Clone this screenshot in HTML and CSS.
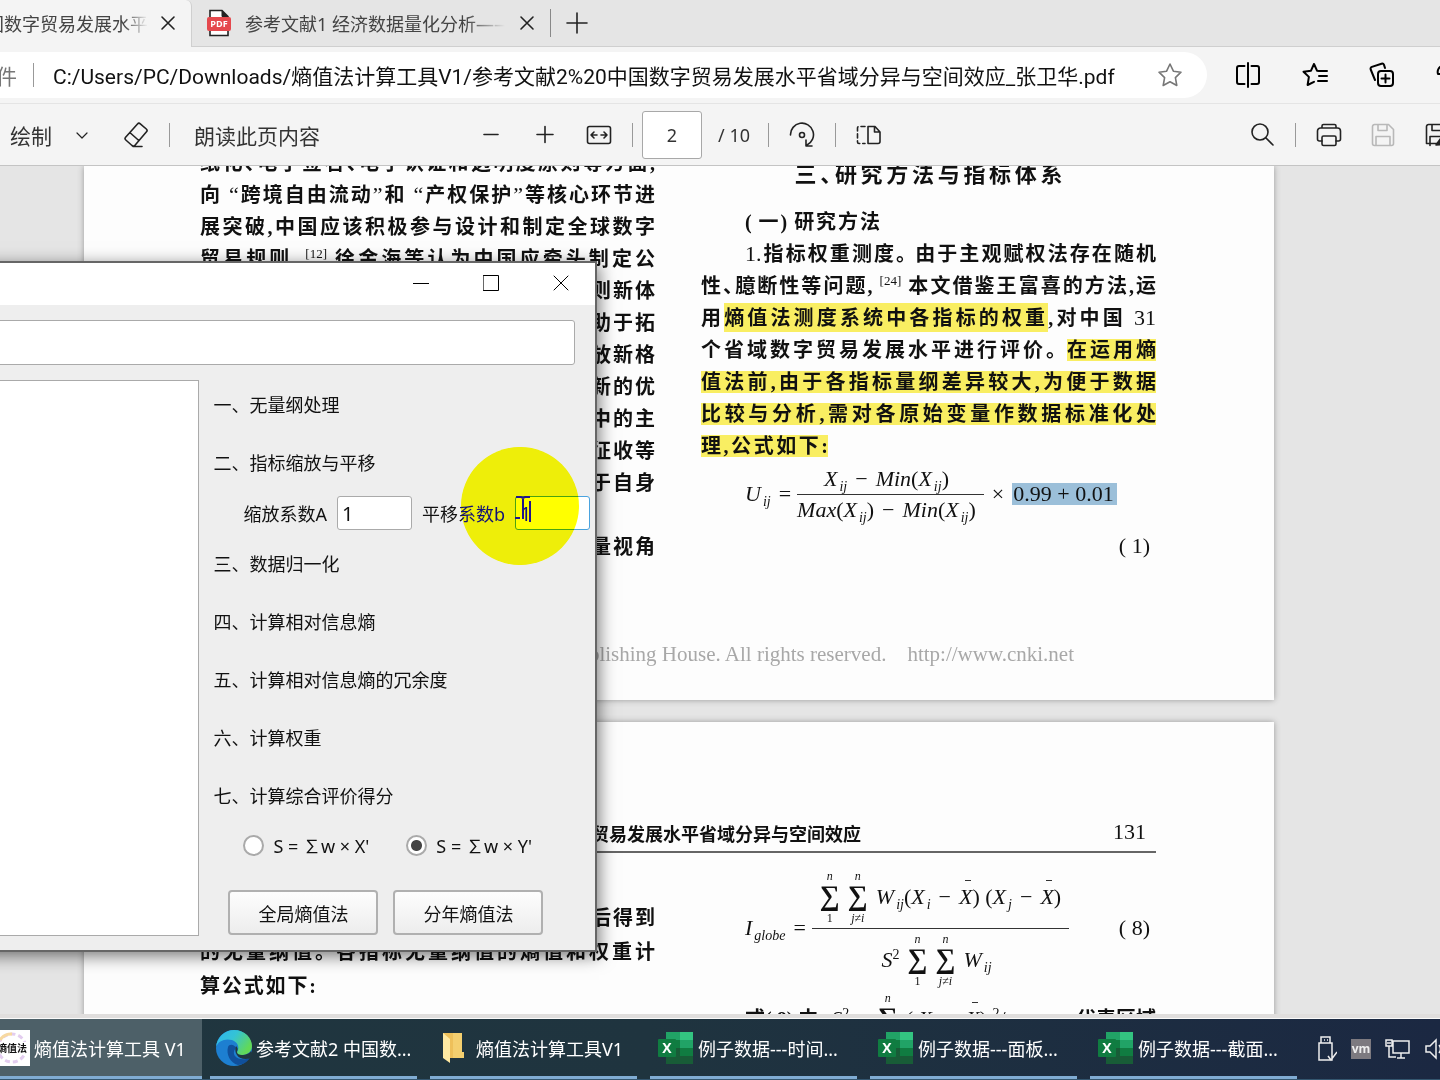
FILE: index.html
```html
<!DOCTYPE html>
<html lang="zh-CN">
<head>
<meta charset="utf-8">
<title>熵值法计算工具 V1</title>
<link rel="stylesheet" href="styles.css">
</head>
<body>
<div class="desktop">
  <div class="browser">
    <div class="tabs">
      <div class="tab tab-active">
        <span class="tab-title">国数字贸易发展水平</span>
        <button class="icon-btn" aria-label="关闭标签页"><svg width="16" height="16" viewBox="0 0 16 16"><path d="M2 2l12 12M14 2L2 14"/></svg></button>
      </div>
      <div class="tab tab-idle">
        <svg class="pdf-icon" width="24" height="28" viewBox="0 0 24 28"><path d="M3 1.500h12l6 6v19H3z" fill="#fff" stroke="#222" stroke-width="1.600"/><path d="M15 1.500v6h6" fill="#222" stroke="#222"/><rect x="0" y="8" width="24" height="14" rx="2" fill="#e5484d"/><text x="12" y="18" text-anchor="middle">PDF</text></svg>
        <span class="tab-title">参考文献1 经济数据量化分析——以</span>
        <button class="icon-btn" aria-label="关闭标签页"><svg width="16" height="16" viewBox="0 0 16 16"><path d="M2 2l12 12M14 2L2 14"/></svg></button>
      </div>
      <span class="tab-divider"></span>
      <button class="icon-btn" aria-label="新建标签页"><svg width="22" height="22" viewBox="0 0 22 22"><path d="M11 1v20M1 11h20"/></svg></button>
    </div>

    <div class="address">
      <div class="address-pill">
        <span class="scheme">件</span>
        <span class="divider"></span>
        <span class="url">C:/Users/PC/Downloads/熵值法计算工具V1/参考文献2%20中国数字贸易发展水平省域分异与空间效应_张卫华.pdf</span>
        <button class="icon-btn faint" aria-label="收藏"><svg width="26" height="26" viewBox="0 0 26 26"><path d="M13 2l3.400 7.200 7.600 1-5.600 5.400 1.400 7.900L13 19.800l-6.800 3.700 1.400-7.900L2 10.200l7.600-1z"/></svg></button>
      </div>
      <div class="address-tools">
        <button class="icon-btn" aria-label="拆分窗口"><svg width="26" height="26" viewBox="0 0 26 26"><path d="M9.500 4H4a2 2 0 0 0-2 2v14a2 2 0 0 0 2 2h5.500M16.500 4H22a2 2 0 0 1 2 2v14a2 2 0 0 1-2 2h-5.500M13 1v24"/></svg></button>
        <button class="icon-btn" aria-label="收藏夹"><svg width="26" height="26" viewBox="0 0 26 26"><path d="M17 9l-2-.3L12 2 9 8.700l-7.500 1 5.400 5.200L5.600 23 12 19.800M17 9h8M17 14h8M16 19h9"/></svg></button>
        <button class="icon-btn" aria-label="集锦"><svg width="26" height="26" viewBox="0 0 26 26"><rect x="9" y="9" width="15" height="15" rx="3"/><path d="M16.500 12.500v8M12.500 16.500h8M6 18L1.700 7.500a2 2 0 0 1 1.200-2.600L12.500 1.700a2 2 0 0 1 2.500 1.200L16 6"/></svg></button>
        <button class="icon-btn" aria-label="浏览器概要"><svg width="26" height="26" viewBox="0 0 26 26"><path d="M2 12a6 6 0 0 1 12-4M2 12h6"/></svg></button>
      </div>
    </div>

    <div class="toolbar">
      <div class="tools tools-left">
        <button class="text-btn">绘制</button>
        <button class="icon-btn" aria-label="绘制选项"><svg width="12" height="12" viewBox="0 0 12 12"><path d="M1 4l5 5 5-5" stroke-width="1.200"/></svg></button>
        <button class="icon-btn eraser" aria-label="橡皮擦"><svg width="26" height="26" viewBox="0 0 26 26"><path d="M9 23.500L2.800 18a2 2 0 0 1-.2-2.800L14.500 2a2 2 0 0 1 2.800-.2l6 5.200a2 2 0 0 1 .2 2.800L12 23.200a2.200 2.200 0 0 1-3 .3zM6.800 10.500l9 8M10 24.500h9"/></svg></button>
        <span class="divider"></span>
        <button class="text-btn">朗读此页内容</button>
      </div>
      <div class="tools tools-mid">
        <button class="icon-btn" aria-label="缩小"><svg width="26" height="26" viewBox="0 0 26 26"><path d="M6 12.500h14"/></svg></button>
        <button class="icon-btn" aria-label="放大"><svg width="26" height="26" viewBox="0 0 26 26"><path d="M13 4.500v16M5 12.500h16"/></svg></button>
        <button class="icon-btn" aria-label="适应宽度"><svg width="26" height="26" viewBox="0 0 26 26"><rect x="1.500" y="4.500" width="23" height="17" rx="2"/><path d="M11 13H5M8 10l-3 3 3 3M15 13h6M18 10l3 3-3 3"/></svg></button>
        <div class="pager">
          <span class="divider"></span>
          <input class="page-input" type="text" value="2" aria-label="页码">
          <span class="page-total">/ 10</span>
          <span class="divider"></span>
        </div>
        <button class="icon-btn" aria-label="旋转"><svg width="26" height="26" viewBox="0 0 26 26"><circle cx="13" cy="13" r="2.500"/><path d="M1.500 13A11.500 11.500 0 1 1 18 23M17 18v6h6"/></svg></button>
        <span class="divider"></span>
        <button class="icon-btn" aria-label="页面视图"><svg width="26" height="26" viewBox="0 0 26 26"><path d="M12 4.500h7l5 5.500v9.500a2 2 0 0 1-2 2H12zM18.500 4.500V10H24"/><path d="M9 4.500H3a1.500 1.500 0 0 0-1.500 1.500v14A1.500 1.500 0 0 0 3 21.500h6" stroke-dasharray="4 3"/></svg></button>
      </div>
      <div class="tools tools-right">
        <button class="icon-btn" aria-label="查找"><svg width="26" height="26" viewBox="0 0 26 26"><circle cx="11" cy="10" r="8"/><path d="M17 16l7 7"/></svg></button>
        <span class="divider"></span>
        <button class="icon-btn" aria-label="打印"><svg width="26" height="26" viewBox="0 0 26 26"><path d="M6 6V4a1.500 1.500 0 0 1 1.500-1.500h11A1.500 1.500 0 0 1 20 4v2M6 19H3.500a2 2 0 0 1-2-2v-8a3 3 0 0 1 3-3h17a3 3 0 0 1 3 3v8a2 2 0 0 1-2 2H20"/><rect x="6" y="14" width="14" height="9.500" rx="1.500"/></svg></button>
        <button class="icon-btn disabled" aria-label="保存" disabled><svg width="26" height="26" viewBox="0 0 26 26"><path d="M4.500 2.500h14l5 5v14a2 2 0 0 1-2 2h-17a2 2 0 0 1-2-2v-17a2 2 0 0 1 2-2zM8 2.500v6h9v-6M6 23.500v-9h14v9"/></svg></button>
        <button class="icon-btn" aria-label="另存为"><svg width="26" height="26" viewBox="0 0 26 26"><path d="M4.500 2.500h14l5 5v14h-21v-17a2 2 0 0 1 2-2zM8 2.500v6h9v-6M6 23.500v-9h12"/><path d="M12 23l5-7 6-5v11z" fill="#222"/></svg></button>
      </div>
    </div>

    <div class="viewer">
      <section class="sheet sheet-first">
        <div class="columns">
          <div class="column column-left">
            <p class="line">纸化、电子签名、电子认证和透明度原则等方面,</p>
            <p class="line">向 <span class="thin">“</span>跨境自由流动<span class="thin">”</span>和 <span class="thin">“</span>产权保护<span class="thin">”</span>等核心环节进</p>
            <p class="line">展突破,中国应该积极参与设计和制定全球数字</p>
            <p class="line">贸易规则。<sup>[12]</sup> 徐金海等认为中国应牵头制定公</p>
            <p class="line tail">则新体</p>
            <p class="line tail">助于拓</p>
            <p class="line tail">放新格</p>
            <p class="line tail">新的优</p>
            <p class="line tail">中的主</p>
            <p class="line tail">征收等</p>
            <p class="line tail">于自身</p>
            <p class="line tail"></p>
            <p class="line tail">量视角</p>
          </div>
          <div class="column column-right">
            <h2 class="heading">三、研究方法与指标体系</h2>
            <p class="line indent subheading">( 一) 研究方法</p>
            <p class="line indent"><span class="thin">1.</span>指标权重测度。 由于主观赋权法存在随机</p>
            <p class="line">性、臆断性等问题, <sup>[24]</sup> 本文借鉴王富喜的方法,运</p>
            <p class="line">用<mark class="tall">熵值法测度系统中各指标的权重</mark>,对中国 <span class="thin">31</span></p>
            <p class="line">个省域数字贸易发展水平进行评价。 <mark>在运用熵</mark></p>
            <p class="line"><mark>值法前,由于各指标量纲差异较大,为便于数据</mark></p>
            <p class="line"><mark>比较与分析,需对各原始变量作数据标准化处</mark></p>
            <p class="line short-seven"><mark>理,公式如下:</mark></p>
            <div class="formula">
              <span><i>U</i><sub>ij</sub></span><span>=</span>
              <span class="frac">
                <span class="num"><span><i>X</i><sub>ij</sub></span><span>−</span><span><i>Min</i>(<i>X</i><sub>ij</sub>)</span></span>
                <span class="den"><span><i>Max</i>(<i>X</i><sub>ij</sub>)</span><span>−</span><span><i>Min</i>(<i>X</i><sub>ij</sub>)</span></span>
              </span>
              <span>×</span>
              <span class="picked">0.99 + 0.01</span>
            </div>
            <p class="formula-no">( 1)</p>
          </div>
        </div>
        <p class="rights">Publishing House. All rights reserved. &nbsp;&nbsp; http://www.cnki.net</p>
      </section>

      <section class="sheet sheet-second">
        <header class="running">
          <span class="running-title">贸易发展水平省域分异与空间效应</span>
          <span class="folio">131</span>
        </header>
        <div class="columns">
          <div class="column loose">
            <p class="line tail">后得到</p>
            <p class="line">的无量纲值。 各指标无量纲值的熵值和权重计</p>
            <p class="line short-six">算公式如下:</p>
          </div>
          <div class="column">
            <div class="formula formula-sum">
              <span><i>I</i><sub>globe</sub></span><span>=</span>
              <span class="frac frac-sum">
                <span class="num">
                  <span class="sum"><i>n</i><b>∑</b><em>1</em></span>
                  <span class="sum"><i>n</i><b>∑</b><i>j≠i</i></span>
                  <span><i>W</i><sub>ij</sub>(<i>X</i><sub>i</sub></span><span>−</span><span><i class="bar">X</i>) (<i>X</i><sub>j</sub></span><span>−</span><span><i class="bar">X</i>)</span>
                </span>
                <span class="den">
                  <span><i>S</i><sup>2</sup></span>
                  <span class="sum"><i>n</i><b>∑</b><em>1</em></span>
                  <span class="sum"><i>n</i><b>∑</b><i>j≠i</i></span>
                  <span><i>W</i><sub>ij</sub></span>
                </span>
              </span>
              <span class="eq-no">( 8)</span>
            </div>
            <div class="formula formula-next">
              <span class="cjk">式( 8) 中,</span>
              <span><i>S</i><sup>2</sup></span><span>=</span>
              <span class="sum"><i>n</i><b>∑</b><em>1</em></span>
              <span>( <i>X</i><sub>i</sub></span><span>−</span><span><i class="bar">X</i>) <sup>2</sup>/<i>n</i>,</span>
              <span class="cjk">代表区域</span>
            </div>
          </div>
        </div>
      </section>
    </div>
  </div>

  <nav class="taskbar">
    <button class="task task-active">
      <svg width="36" height="36" viewBox="0 0 36 36"><rect width="36" height="36" fill="#fff"/><circle cx="18" cy="18" r="14" fill="none" stroke="#e3cdef" stroke-width="3" stroke-dasharray="5 3"/><path d="M6 10a14 14 0 0 1 12-6" fill="none" stroke="#f7d9a0" stroke-width="3"/><rect x="4" y="12" width="32" height="12" fill="#fff"/><text class="app-mark" x="18" y="22" text-anchor="middle">熵值法</text></svg>
      <span>熵值法计算工具 V1</span>
    </button>
    <button class="task">
      <svg width="36" height="36" viewBox="0 0 36 36"><defs><linearGradient id="ea" x1="0" y1="0" x2="1" y2=".5"><stop offset="0" stop-color="#2fb5ee"/><stop offset=".5" stop-color="#34c3d6"/><stop offset="1" stop-color="#62d957"/></linearGradient></defs><circle cx="18" cy="18" r="18" fill="#1d7fd1"/><path d="M0 17C1 7 9 0 18 0c11 0 18 8 18 16 0 6-5 9-10 9-4 0-6-2-5-3 3-4 1-10-5-12C9 8 2 11 0 17z" fill="url(#ea)"/><path d="M12 17c-2 7 2 16 10 18 5 0 9-3 12-7-5 2-12 2-15-2-2-3-1-6 1-8-2-4-7-4-8-1z" fill="#10509c"/><path d="M20 16c3 3 1 5 1 6 0 2 2 3 5 3 4 0 8-2 9-4 2 3 1 5 0 7-5 2-12 1-14-3-2-3-2-6-1-9z" fill="#203740"/></svg>
      <span>参考文献2 中国数...</span>
    </button>
    <button class="task">
      <svg width="36" height="36" viewBox="0 0 36 36"><path d="M7 3h19v25H7z" fill="#eec05a"/><path d="M17 3h9v19h2v6H17z" fill="#f4cf6f"/><path d="M7 3l7 6v24l-7-5z" fill="#ffe9a2"/></svg>
      <span>熵值法计算工具V1</span>
    </button>
    <button class="task task-sheet">
      <svg width="36" height="36" viewBox="0 0 36 36"><use href="#excel"/></svg>
      <span>例子数据---时间...</span>
    </button>
    <button class="task task-sheet">
      <svg width="36" height="36" viewBox="0 0 36 36"><use href="#excel"/></svg>
      <span>例子数据---面板...</span>
    </button>
    <button class="task task-sheet">
      <svg width="36" height="36" viewBox="0 0 36 36"><g id="excel"><path d="M8 2h14v8H8z" fill="#21a366"/><path d="M22 2h13v8H22z" fill="#33c481"/><path d="M8 10h14v8H8z" fill="#107c41"/><path d="M22 10h13v8H22z" fill="#21a366"/><path d="M8 18h14v8H8z" fill="#185c37"/><path d="M22 18h13v8H22z" fill="#107c41"/><path d="M8 26h27v8H8z" fill="#185c37"/><rect x="0" y="9" width="18" height="18" rx="1" fill="#107c41"/><text class="excel-x" x="9" y="23" text-anchor="middle">X</text></g></svg>
      <span>例子数据---截面...</span>
    </button>
    <div class="tray">
      <svg width="20" height="28" viewBox="0 0 20 28"><path d="M4 8V2h9v6M2 8h13v17H2zM7 5h1M10 5h1M11 21l3 4 6-8"/></svg>
      <svg width="20" height="20" viewBox="0 0 20 20"><rect width="20" height="20" fill="#7d7a80" stroke="none"/><text class="vm" x="10" y="14" text-anchor="middle">vm</text></svg>
      <svg width="26" height="22" viewBox="0 0 26 22"><path d="M8 3h16v12H8zM12 20h8M16 15v5M1 2h6v6H1zM4 8v11h7M3 4v2M5 4v2"/></svg>
      <svg width="26" height="22" viewBox="0 0 26 22"><path d="M1 8h4l6-6v18l-6-6H1zM14 7q3 4 0 8M18 4q5 7 0 14"/></svg>
    </div>
  </nav>

  <div class="dialog" role="dialog" aria-label="熵值法计算工具">
    <div class="titlebar">
      <button class="icon-btn" aria-label="最小化"><svg width="16" height="16" viewBox="0 0 16 16"><path d="M0 8.500h16"/></svg></button>
      <button class="icon-btn" aria-label="最大化"><svg width="16" height="16" viewBox="0 0 16 16"><path d="M.5 .5h15v15h-15z"/></svg></button>
      <button class="icon-btn" aria-label="关闭"><svg width="16" height="16" viewBox="0 0 16 16"><path d="M1 1l14 14M15 1L1 15"/></svg></button>
    </div>
    <div class="dialog-body">
      <input class="path" type="text" aria-label="文件路径">
      <div class="panes">
        <textarea class="log" aria-label="输出"></textarea>
        <form class="steps">
          <p class="step">一、无量纲处理</p>
          <p class="step step-open">二、指标缩放与平移</p>
          <div class="fields">
            <label for="scale">缩放系数A</label><input id="scale" type="text" value="1">
            <label for="shift">平移系数b</label><span class="shift-box"><input id="shift" class="focused" type="text" value="1"><span class="spot"></span><svg class="pointer" width="16" height="26" viewBox="0 0 16 26"><path d="M1 1h5l2 1 2-1h5M8 2v21M15 5v21M0 22h5"/></svg></span>
          </div>
          <p class="step">三、数据归一化</p>
          <p class="step">四、计算相对信息熵</p>
          <p class="step">五、计算相对信息熵的冗余度</p>
          <p class="step">六、计算权重</p>
          <p class="step step-last">七、计算综合评价得分</p>
          <div class="choices">
            <label><input type="radio" name="score">S = ∑w × X'</label>
            <label><input type="radio" name="score" checked>S = ∑w × Y'</label>
          </div>
          <div class="actions">
            <button type="button">全局熵值法</button>
            <button type="button">分年熵值法</button>
          </div>
        </form>
      </div>
    </div>
  </div>
</div>
</body>
</html>
```
FILE: styles.css
```css
* { box-sizing: border-box; }
body {
  margin: 0;
  font-family: "Noto Sans", "Noto Sans CJK SC", sans-serif;
  font-size: 18px;
  color: #222;
}
p, h2 { margin: 0; }
button, input, textarea { font: inherit; color: inherit; }
button { border: 0; background: none; padding: 0; }
svg { display: block; flex: none; }

.desktop {
  position: relative;
  height: 100vh;
  display: flex;
  flex-direction: column;
  overflow: hidden;
}
.browser {
  flex: 1;
  min-height: 0;
  display: flex;
  flex-direction: column;
  background: #f4f4f4;
  border-bottom: 1px solid #fafafa;
}
.icon-btn { flex: none; display: flex; }
.icon-btn svg {
  fill: none;
  stroke: #222;
  stroke-width: 1.600;
  stroke-linecap: round;
  stroke-linejoin: round;
}
.icon-btn.faint svg { stroke: #777; }
.icon-btn.disabled svg { stroke: #b8b8b8; }
.divider { flex: none; width: 1px; height: 24px; background: #999; }

/* Tab strip */
.tabs {
  flex: none;
  height: 47px;
  display: flex;
  align-items: center;
  background: #e5e5e5;
  border-bottom: 1px solid #cfcfcf;
}
.tab { display: flex; align-items: center; height: 47px; color: #444; }
.tab-active {
  width: 192px;
  padding-right: 15px;
  background: #f4f4f4;
  border-right: 1px solid #cfcfcf;
  border-radius: 0 6px 0 0;
  justify-content: flex-end;
  gap: 12px;
  overflow: hidden;
}
.tab-title {
  white-space: nowrap;
  overflow: hidden;
  -webkit-mask-image: linear-gradient(to right, #000 85%, transparent);
  mask-image: linear-gradient(to right, #000 85%, transparent);
}
.tab-active .tab-title { flex: none; }
.tab-idle { padding: 0 15px 0 15px; gap: 14px; }
.tab-idle .tab-title { width: 260px; }
.tab-divider { width: 1px; height: 28px; background: #888; margin-right: 15px; }
.pdf-icon text { font: bold 9px "Open Sans", sans-serif; fill: #fff; }

/* Address bar */
.address { flex: none; height: 57px; display: flex; align-items: center; border-bottom: 1px solid #e4e4e4; }
.address-pill {
  flex: 1;
  min-width: 0;
  height: 46px;
  display: flex;
  align-items: center;
  background: #fff;
  border-radius: 0 23px 23px 0;
  padding-right: 24px;
  font-size: 21px;
  overflow: hidden;
  white-space: nowrap;
}
.scheme { color: #777; margin: 0 16px 0 -4px; }
.url { flex: 1; min-width: 0; overflow: hidden; color: #111; margin-left: 19px; font-family: Roboto, "Noto Sans CJK SC", sans-serif; }
.address-tools { flex: none; width: 233px; padding-left: 28px; display: flex; gap: 41px; overflow: hidden; }
.address-tools svg { stroke: #000; stroke-width: 2; }

/* Reader toolbar */
.toolbar {
  flex: none;
  height: 62px;
  display: flex;
  align-items: center;
  border-bottom: 1px solid #c4c4c4;
  font-size: 21px;
  color: #333;
}
.tools { display: flex; align-items: center; }
.tools-left { flex: 0 0 478px; padding-left: 10px; gap: 24px; }
.tools-left .eraser { margin-left: 11px; }
.tools-left .divider { margin: 0 0 0 -4px; }
.tools-mid { gap: 28px; }
.pager { display: flex; align-items: center; margin-left: -8px; gap: 18px; font-size: 18px; }
.page-input {
  width: 60px;
  height: 48px;
  border: 1px solid #a8a8a8;
  border-radius: 3px;
  background: #fff;
  text-align: center;
  padding: 0;
  margin: 0 -2px 0 -9px;
}
.tools-mid > .divider { margin: 0 -8px; }
.pager + .icon-btn { margin-left: -8px; }
.tools-right { margin-left: auto; margin-right: -10px; gap: 28px; }
.tools-right .divider { margin: 0 -8px; }

/* Document pages */
.viewer { flex: 1; min-height: 0; overflow: hidden; background: #e5e5e5; border-bottom: 4px solid #e0dedd; }
.sheet {
  margin: 0 166px 22px 84px;
  padding: 0 118px 0 116px;
  background: #fdfdfd;
  box-shadow: 0 0 6px #999;
  color: #111;
}
.sheet-first { height: 534px; display: flex; flex-direction: column; }
.columns { display: grid; grid-template-columns: 1fr 1fr; gap: 46px; }
.line, .heading, .cjk {
  font-family: "Liberation Serif", "Noto Sans CJK SC", sans-serif;
  font-weight: 700;
  font-size: 20px;
  line-height: 32px;
  font-feature-settings: "halt";
}
.line { height: 32px; white-space: nowrap; text-align: justify; text-align-last: justify; }
.line.indent { padding-left: 44px; }
.line.subheading { width: 179px; }
.line.short-seven { width: 127px; }
.line.short-six { width: 116px; }
.line.tail { width: 64px; margin-left: auto; }
.thin { font-weight: 400; font-size: 22px; line-height: 22px; }
.line sup { font-size: 13px; font-weight: 400; line-height: 0; }
.column-left { margin-top: -19px; }
.column-right { margin-top: -7px; }
.heading { font-size: 22px; width: 268px; margin: 0 auto 15px; text-align: justify; text-align-last: justify; white-space: nowrap; }
mark { color: inherit; background: #f9ee62; }
mark.tall { padding: 4px 0 3px; }

.formula {
  display: flex;
  align-items: center;
  gap: 8px;
  height: 64px;
  padding-left: 44px;
  font-family: "Liberation Serif", serif;
  font-size: 22px;
  line-height: 30px;
  white-space: nowrap;
}
.formula sub { font-size: 14px; font-style: italic; line-height: 0; margin-left: 2px; }
.formula sup { font-size: 14px; line-height: 0; }
.frac { display: flex; flex-direction: column; margin-left: -2px; }
.num, .den { display: flex; justify-content: center; align-items: center; gap: 8px; padding-right: 8px; }
.num { border-bottom: 1px solid #333; }
.picked { background: #9bbfd9; line-height: 22px; padding: 0 3px 0 1px; }
.formula-no { margin-top: 4px; padding-right: 6px; text-align: right; font-family: "Liberation Serif", serif; font-size: 22px; line-height: 32px; }
.rights { margin-top: auto; padding: 0 82px 30px 0; text-align: right; font-family: "Liberation Serif", serif; font-size: 21px; line-height: 32px; color: #a8a8a8; }

.sheet-second { padding-top: 94px; height: 500px; }
.running { height: 37px; display: flex; align-items: flex-start; justify-content: flex-end; gap: 252px; border-bottom: 2px solid #666; }
.running-title { font-family: "Noto Sans CJK SC", sans-serif; font-weight: 700; line-height: 34px; font-size: 18px; }
.folio { font-family: "Liberation Serif", serif; font-size: 22px; line-height: 32px; padding-right: 10px; }
.loose { padding-top: 48px; }
.loose .line { line-height: 34px; height: 34px; }
.formula-sum { height: 118px; margin-top: 16px; }
.sum { display: flex; flex-direction: column; align-items: center; font-size: 12px; line-height: 12px; }
.sum b { font-size: 28px; line-height: 28px; font-weight: 700; padding-bottom: 2px; }
.sum em { font-style: normal; }
.frac-sum .num { padding: 0 8px 4px; }
.frac-sum .den { padding-top: 4px; }
.bar { position: relative; }
.bar::after { content: ""; position: absolute; left: 6px; top: -4px; width: 6px; height: 1px; background: #333; }
.eq-no { margin-left: auto; padding-right: 6px; }
.formula-next { height: 52px; margin-top: 6px; }
.formula-next .cjk:last-child { margin-left: auto; }

/* Taskbar */
.taskbar {
  flex: none;
  height: 61px;
  display: flex;
  gap: 13px;
  background: linear-gradient(to right, #20363f, #1f343f 45%, #1b2842);
  border-bottom: 1px solid #34566f;
  color: #fff;
}
.task {
  flex: none;
  width: 207px;
  display: flex;
  align-items: center;
  gap: 4px;
  padding-left: 6px;
  white-space: nowrap;
  border-bottom: 3px solid #80acd3;
}
.task-active { width: 202px; margin-right: -5px; padding-left: 0; background: #4d6068; }
.task-active svg { margin-left: -6px; }
.task-sheet { padding-left: 8px; }
.app-mark { font: bold 10px "Noto Sans CJK SC", sans-serif; fill: #111; }
.excel-x { font: bold 14px "Open Sans", sans-serif; fill: #fff; }
.tray { flex: none; display: flex; align-items: center; gap: 14px; margin-left: 7px; }
.tray svg { fill: none; stroke: #eee; stroke-width: 1.500; }
.tray .vm { font: bold 12px "Open Sans", sans-serif; fill: #eee; stroke: none; }

/* Calculator window, partly off the left edge of the desktop */
.dialog {
  position: absolute;
  left: -40px;
  top: 261px;
  width: 637px;
  border: 2px solid #666;
  background: #eee;
  color: #111;
  box-shadow: 2px 4px 16px #0008;
}
.titlebar { height: 42px; display: flex; align-items: center; justify-content: flex-end; gap: 54px; padding: 0 26px 3px; background: #fff; }
.titlebar svg { stroke: #000; stroke-width: 1; }
.dialog-body { padding: 15px 5px 14px 18px; display: flex; flex-direction: column; gap: 15px; }
.dialog input[type="text"], .log { background: #fff; border: 1px solid #aaa; border-radius: 3px; outline: 0; padding: 0 4px; }
.dialog .path { height: 45px; margin-right: 15px; }
.panes { display: flex; gap: 14px; }
.dialog .log { width: 220px; border-radius: 0; resize: none; }
.steps { flex: 1; padding: 11px 0 1px; }
.step { line-height: 28px; margin-bottom: 30px; }
.step-open { margin-bottom: 19px; }
.step-last { margin-bottom: 21px; }
.fields { display: flex; align-items: center; height: 34px; gap: 10px; padding-left: 30px; margin-bottom: 20px; white-space: nowrap; }
.fields label { flex: none; }
.dialog .fields input { flex: none; display: block; width: 75px; height: 34px; font-size: 20px; }
.dialog .fields .focused { border-color: #4aa3df; }
.shift-box { position: relative; }
.spot::before, .spot::after {
  content: "";
  position: absolute;
  left: -54px;
  top: -49px;
  width: 118px;
  height: 118px;
  border-radius: 50%;
}
.spot::before { background: #ffff80; mix-blend-mode: multiply; }
.spot::after { background: #000080; mix-blend-mode: difference; }
.pointer { position: absolute; left: 0; top: 0; fill: none; stroke: #22148c; stroke-width: 2; }
.choices { display: flex; gap: 37px; padding-left: 30px; height: 28px; align-items: center; }
.choices label { display: flex; align-items: center; gap: 9px; white-space: nowrap; }
.choices input {
  appearance: none;
  width: 21px;
  height: 21px;
  margin: 0;
  border: 2px solid #aaa;
  border-radius: 50%;
  background: #fff;
}
.choices input:checked { background: radial-gradient(circle, #444 5px, #fff 6px); }
.actions { display: flex; gap: 15px; padding: 31px 0 0 15px; }
.actions button { width: 150px; height: 45px; border: 2px solid #b0b0b0; border-radius: 4px; background: linear-gradient(#fdfdfd, #ededed); }
```
